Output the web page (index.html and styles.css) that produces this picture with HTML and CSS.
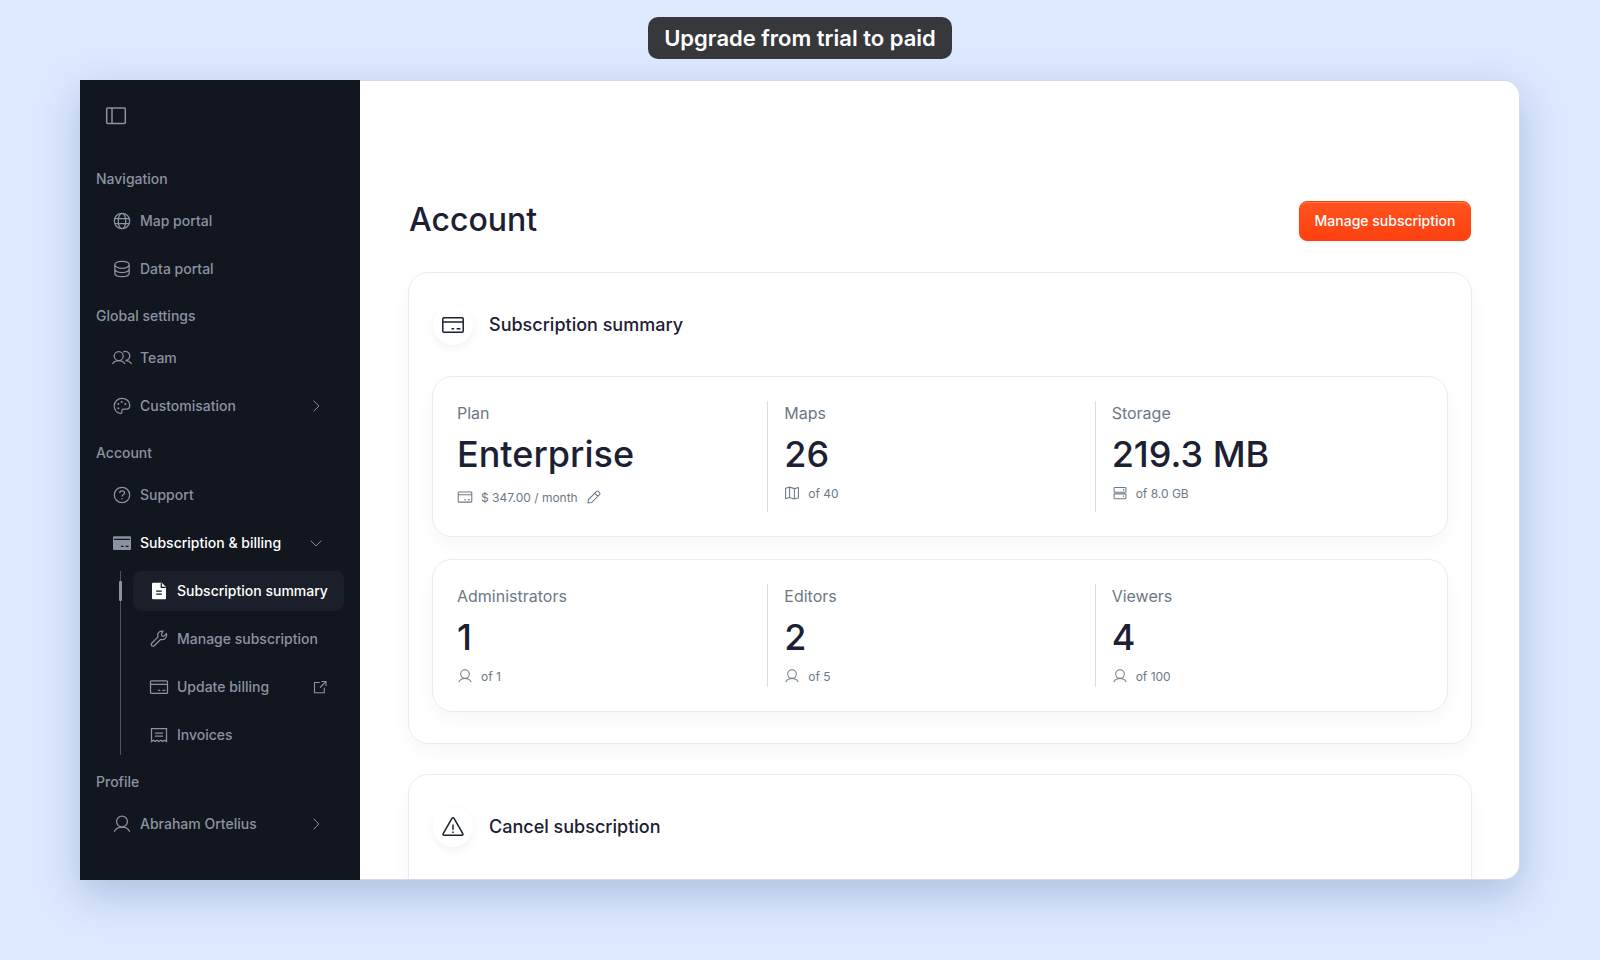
FILE: index.html
```html
<!DOCTYPE html>
<html lang="en">
<head>
<meta charset="utf-8">
<title>Account</title>
<link rel="stylesheet" href="styles.css">
</head>
<body>
<svg class="defs" aria-hidden="true">
  <symbol id="card" viewBox="0 0 20 20"><rect x="1.5" y="3.8" width="17" height="12.6" rx="1"/><path d="M1.500 7.300h17M9 13.400h2.300M13.500 13.400h2.900"/></symbol>
  <symbol id="user" viewBox="0 0 20 20"><circle cx="10" cy="7.600" r="5.400"/><path d="M2.300 17.700c1.300-2.900 4-4.500 7.700-4.500s6.400 1.600 7.700 4.500"/></symbol>
  <symbol id="chevron" viewBox="0 0 20 20"><path d="M7.600 4.700 12.900 10l-5.300 5.300"/></symbol>
</svg>
<header class="caption">Upgrade from trial to paid</header>
<div class="window">
  <nav class="sidebar">
    <svg class="toggle" viewBox="0 0 22 20"><rect x="1.700" y="2" width="18.600" height="15.600" rx="1"/><path d="M7 2v15.600"/></svg>
    <h2 class="section">Navigation</h2>
    <a class="item"><svg class="icon" viewBox="0 0 20 20"><circle cx="10" cy="10" r="7.700"/><ellipse cx="10" cy="10" rx="3.700" ry="7.700"/><path d="M2.700 7.700h14.600M2.700 12.500h14.600"/></svg>Map portal</a>
    <a class="item"><svg class="icon" viewBox="0 0 20 20"><path d="M2.800 5.600c0-2 3-3.300 7.200-3.300s7.200 1.300 7.200 3.300-3 3.700-7.200 3.700-7.200-1.700-7.200-3.700ZM2.800 5.600v8.400c0 2.100 3 3.700 7.200 3.700s7.200-1.600 7.200-3.700V5.600M2.800 9.800c0 2.100 3 3.700 7.200 3.700s7.200-1.600 7.200-3.700"/></svg>Data portal</a>
    <h2 class="section">Global settings</h2>
    <a class="item"><svg class="icon" viewBox="0 0 20 20"><circle cx="6.700" cy="8" r="4.500"/><path d="M.5 16c1.200-2.300 3.300-3.500 6.200-3.500s5.100 1.200 6.200 3.500M11.200 3.900a4.500 4.500 0 1 1 2.200 8.500M13.400 12.500c2.900 0 5 1.200 6.200 3.500"/></svg>Team</a>
    <a class="item"><svg class="icon" viewBox="0 0 20 20"><path d="M8.300 17.500C5.200 16.900 2.200 14.200 2.200 9.800a7.700 7.700 0 0 1 7.800-7.500c4.300 0 7.700 3 7.700 7 0 2.300-1.200 3.900-3.200 3.900h-3c-1.200 0-1.700.7-1.600 1.700.1 1.300-.2 2.800-1.600 2.600Z"/><g class="dots"><circle cx="9.700" cy="5.900" r="1"/><circle cx="13.300" cy="8" r="1"/><circle cx="6.300" cy="8" r="1"/><circle cx="6.300" cy="12.200" r="1"/></g></svg>Customisation<svg class="icon end thin"><use href="#chevron"/></svg></a>
    <h2 class="section">Account</h2>
    <a class="item"><svg class="icon" viewBox="0 0 20 20"><circle cx="10" cy="10" r="7.700"/><path d="M7.600 8c.1-1.400 1.200-2.100 2.500-2.100s2.500.8 2.500 2c0 1.600-2.500 1.600-2.500 3.600"/><path d="M10.100 13.200v1.400"/></svg>Support</a>
    <a class="item open"><svg class="icon" viewBox="0 0 20 20"><rect class="fill" x="1" y="3.300" width="18" height="13.700" rx="1"/><path class="cut" d="M2 6.300h16M9 13.400h2.500M13.500 13.400h3"/></svg>Subscription &amp; billing<svg class="icon end down thin"><use href="#chevron"/></svg></a>
    <div class="children">
      <a class="item active"><svg class="icon" viewBox="0 0 20 20"><path class="fill" d="M4 1.700h8.800L17 6v11.200a1 1 0 0 1-1 1H4a1 1 0 0 1-1-1V2.700a1 1 0 0 1 1-1Z"/><path class="cut" d="M12.300 2.300v4h4.300M7.200 10.200h5.600M7.200 13.200h5.600"/></svg>Subscription summary</a>
      <a class="item"><svg class="icon" viewBox="0 0 20 20"><path d="M13.900 2.200c-2.300-.5-5 .9-5.200 3.700 0 .8.100 1.400.3 2L2.700 14.200a1.900 1.900 0 0 0 0 2.500c.7.700 1.800.7 2.500 0L11.600 10.500c3 .9 6.300-1 6-4.800l-.3-1-2.500 2.700-1.900-.4-.4-1.900Z"/></svg>Manage subscription</a>
      <a class="item"><svg class="icon"><use href="#card"/></svg>Update billing<svg class="icon end link" viewBox="0 0 20 20"><path d="M9.800 5.500H4.500v10.300h9.800V10.600M11.500 4.500h4.500v4.500M15.900 4.600 10 10.500"/></svg></a>
      <a class="item"><svg class="icon" viewBox="0 0 20 20"><path d="M2.500 16.500V3.500h15v13l-1.900-1.300-1.900 1.300-1.800-1.300-1.900 1.300-1.900-1.300-1.800 1.300-1.900-1.300ZM6 8h8M6 11h8"/></svg>Invoices</a>
    </div>
    <h2 class="section">Profile</h2>
    <a class="item"><svg class="icon"><use href="#user"/></svg>Abraham Ortelius<svg class="icon end thin"><use href="#chevron"/></svg></a>
  </nav>
  <main class="main">
    <div class="heading"><h1 class="title">Account</h1><button class="button">Manage subscription</button></div>
    <section class="panel">
      <div class="panel-head"><span class="badge"><svg class="badge-icon" viewBox="0 0 24 24"><rect x="1.800" y="4.800" width="20.400" height="14.400" rx="1"/><path d="M1.800 9h20.400M10.500 15.800h2.600M15.600 15.800h3.800"/></svg></span>Subscription summary</div>
      <div class="stats">
        <div class="stat"><span class="label">Plan</span><strong class="value">Enterprise</strong><span class="note plan"><svg class="mini"><use href="#card"/></svg>$ 347.00 / month<svg class="mini edit" viewBox="0 0 20 20"><path d="m2.500 17.500.6-4.300L13 3.200c.9-.9 1.900-.9 2.700 0l1.200 1.200c.9.900.9 1.800 0 2.700L7 17ZM11 5.200l3.900 3.900"/></svg></span></div>
        <div class="stat"><span class="label">Maps</span><strong class="value">26</strong><span class="note"><svg class="mini" viewBox="0 0 20 20"><path d="m2 4 5-1.300 6 1.800L18 3.200v13l-5 1.300-6-1.800L2 17ZM7 2.700v13M13 4.500v13"/></svg>of 40</span></div>
        <div class="stat"><span class="label">Storage</span><strong class="value">219.3 MB</strong><span class="note"><svg class="mini" viewBox="0 0 20 20"><rect x="2.600" y="3.100" width="14.800" height="6" rx=".8"/><rect x="2.600" y="11.100" width="14.800" height="6" rx=".8"/><path d="M14.500 5.100v2M14.500 13.100v2"/></svg>of 8.0 GB</span></div>
      </div>
      <div class="stats seats">
        <div class="stat"><span class="label">Administrators</span><strong class="value">1</strong><span class="note"><svg class="mini"><use href="#user"/></svg>of 1</span></div>
        <div class="stat"><span class="label">Editors</span><strong class="value">2</strong><span class="note"><svg class="mini"><use href="#user"/></svg>of 5</span></div>
        <div class="stat"><span class="label">Viewers</span><strong class="value">4</strong><span class="note"><svg class="mini"><use href="#user"/></svg>of 100</span></div>
      </div>
    </section>
    <section class="panel">
      <div class="panel-head"><span class="badge"><svg class="badge-icon" viewBox="0 0 24 24"><path d="M11.100 3.200c.4-.7 1.400-.7 1.800 0l8.900 15.500c.4.800 0 1.500-.9 1.500H3.100c-.9 0-1.300-.7-.9-1.500ZM12 9.500v5.200M12 16.400v1.600"/></svg></span>Cancel subscription</div>
    </section>
  </main>
</div>
</body>
</html>
```
FILE: styles.css
```css
* { box-sizing: border-box; }
body {
  margin: 0;
  height: 960px;
  overflow: hidden;
  display: flex;
  flex-direction: column;
  align-items: center;
  padding-top: 17px;
  background: #dde9ff;
  color: #1c2033;
  font-family: Inter, sans-serif;
}
svg { fill: none; stroke: currentColor; stroke-width: 1.25; flex: none; }
.defs { display: none; }
.caption {
  height: 42px;
  padding: 0 16px;
  border-radius: 10px;
  background: #37383c;
  color: #fff;
  font-size: 22px;
  font-weight: 600;
  line-height: 42px;
}
.window {
  width: 1440px;
  height: 800px;
  margin-top: 21px;
  display: flex;
  border-radius: 0 16px 16px 0;
  box-shadow: 0 14px 42px rgba(28, 64, 120, .25);
}
.sidebar {
  width: 280px;
  padding: 24px 16px;
  background: #12161f;
  color: #8b93a1;
  font-size: 14px;
  font-weight: 500;
}
.toggle { display: block; width: 22px; height: 20px; margin: 2px 0 0 9px; stroke-width: 1.5; }
.section {
  height: 24px;
  margin: 15px 0 10px;
  font-size: 14px;
  font-weight: 500;
  line-height: 24px;
}
.toggle + .section { margin-top: 41px; }
.item {
  display: flex;
  align-items: center;
  gap: 8px;
  height: 40px;
  margin-bottom: 8px;
  padding: 0 18px 2px 16px;
  border-radius: 8px;
}
.item:has(+ .section), .children .item:last-child { margin-bottom: 0; }
.icon { width: 20px; height: 20px; margin-top: 2px; }
.end { margin-left: auto; }
.thin { stroke-width: 1; }
.link { stroke-width: 1.1; }
.down { transform: rotate(90deg); }
.fill { fill: currentColor; stroke: none; }
.cut { stroke: #12161f; }
.dots { fill: currentColor; stroke: none; }
.open { color: #fff; }
.open .icon { color: #8b93a1; }
.children {
  position: relative;
  margin-left: 24px;
  padding-left: 12px;
  border-left: 1px solid #4f545f;
}
.children::before {
  content: "";
  position: absolute;
  left: -2px;
  top: 10px;
  width: 3px;
  height: 20px;
  border-radius: 1px;
  background: #8b93a1;
}
.children .item { padding: 0 14px 2px 16px; }
.active { background: #1b1f29; color: #fff; }
.main {
  flex: 1;
  margin: 1px 1px 1px 0;
  padding: 120px 47px 0 48px;
  overflow: hidden;
  border-radius: 0 15px 15px 0;
  background: #fff;
  box-shadow: 0 0 0 1px rgba(0, 0, 0, .06);
}
.heading { display: flex; align-items: center; justify-content: space-between; height: 40px; margin: 0 1px 31px; }
.title { margin: 0; padding-bottom: 2px; font-size: 32px; font-weight: 500; line-height: 38px; }
.button {
  width: 172px;
  height: 40px;
  padding: 0 0 2px;
  border: 1px solid #f8430f;
  border-radius: 8px;
  background: linear-gradient(#ff5420, #ff4010);
  box-shadow: inset 0 1px rgba(255, 255, 255, .2), 0 1px 2px rgba(0, 0, 0, .08);
  color: #fff;
  font: 500 14px Inter, sans-serif;
  white-space: nowrap;
}
.panel {
  margin-bottom: 30px;
  padding: 32px 23px 31px;
  border: 1px solid #ebebec;
  border-radius: 20px;
  box-shadow: 0 8px 20px rgba(0, 0, 0, .035);
}
.panel-head {
  display: flex;
  align-items: center;
  gap: 16px;
  height: 40px;
  margin-bottom: 31px;
  padding: 0 0 2px 1px;
  font-size: 18px;
  font-weight: 500;
}
.badge {
  display: flex;
  align-items: center;
  justify-content: center;
  width: 40px;
  height: 40px;
  margin-top: 2px;
  border-radius: 50%;
  box-shadow: 0 3px 9px rgba(0, 0, 0, .06);
}
.badge-icon { width: 24px; height: 24px; stroke-width: 1.5; }
.stats {
  display: grid;
  grid-template-columns: repeat(3, 1fr);
  gap: 16px;
  height: 161px;
  padding: 24px;
  border: 1px solid #ebebec;
  border-radius: 20px;
  box-shadow: 0 8px 20px rgba(0, 0, 0, .035);
}
.seats { height: 153px; margin-top: 22px; }
.stat { display: flex; flex-direction: column; border-right: 1px solid #dcdde0; }
.stat:last-child { border-right: 0; }
.label { color: #6c7886; font-size: 16px; line-height: 24px; }
.value { margin-top: 7px; font-size: 36px; font-weight: 500; line-height: 44px; }
.note { display: flex; align-items: center; gap: 8px; height: 16px; margin-top: 9px; color: #6c7886; font-size: 12px; }
.plan { margin-top: 13px; }
.mini { width: 16px; height: 16px; stroke-width: 1.3; }
```
